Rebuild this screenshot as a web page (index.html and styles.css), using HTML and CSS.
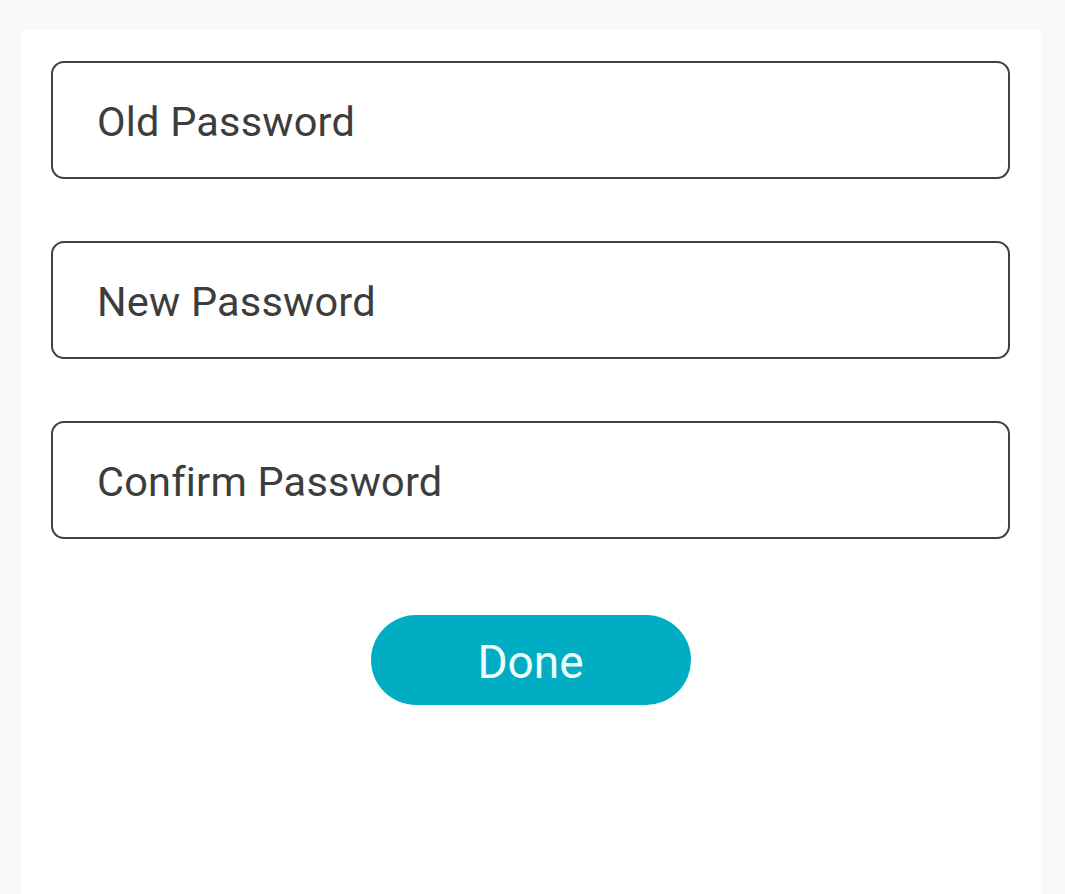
FILE: index.html
```html
<!DOCTYPE html>
<html>
<head>
<meta charset="utf-8">
<link rel="stylesheet" href="styles.css">
</head>
<body>
<div class="panel">
  <div class="field"><span class="label">Old Password</span></div>
  <div class="field"><span class="label">New Password</span></div>
  <div class="field"><span class="label">Confirm Password</span></div>
  <div class="actions"><button class="done">Done</button></div>
</div>
</body>
</html>
```
FILE: styles.css
```css
html, body {
  margin: 0;
  padding: 0;
  background: #f9f9f9;
  font-family: Roboto, "Liberation Sans", sans-serif;
}
body {
  padding: 30px 24px 0 21px;
  height: 894px;
  box-sizing: border-box;
  overflow: hidden;
}
.panel {
  background: #ffffff;
  height: 100%;
  padding: 31px 31px 0 30px;
  box-sizing: border-box;
  display: flex;
  flex-direction: column;
  gap: 62px;
}
.field {
  height: 118px;
  box-sizing: border-box;
  border: 2px solid #414141;
  border-radius: 13px;
  display: flex;
  align-items: center;
  padding-left: 44px;
  padding-top: 3px;
}
.label {
  font-size: 41.5px;
  color: #3d3d3d;
  letter-spacing: 0.2px;
}
.actions {
  display: flex;
  justify-content: center;
  margin-top: 14px;
}
.done {
  width: 320px;
  height: 90px;
  border: none;
  border-radius: 45px;
  background: #00adc3;
  color: #eefcfd;
  font-family: Roboto, "Liberation Sans", sans-serif;
  font-size: 46px;
  padding: 3px 0 0 0;
}
```
